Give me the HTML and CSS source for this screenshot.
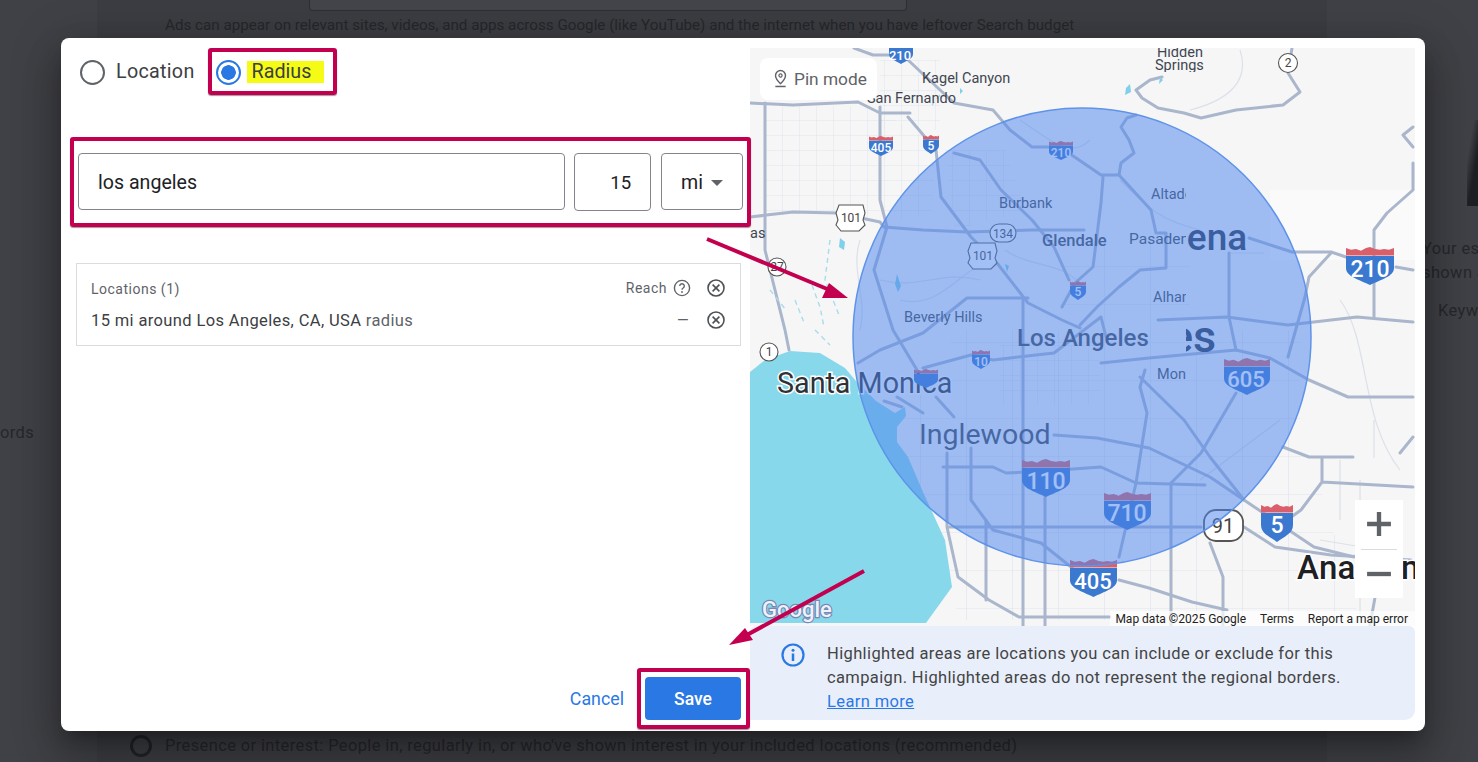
FILE: index.html
```html
<!DOCTYPE html>
<html lang="en">
<head>
<meta charset="utf-8">
<title>Location targeting</title>
<link rel="stylesheet" href="styles.css">
</head>
<body>
<div class="page">
  <div class="bg-left">ords</div>
  <div class="bg-card">
    <div class="bg-box"></div>
    <p class="bg-text">Ads can appear on relevant sites, videos, and apps across Google (like YouTube) and the internet when you have leftover Search budget</p>
    <div class="bg-radio-row"><span class="bg-radio"></span><span>Presence or interest: People in, regularly in, or who've shown interest in your included locations (recommended)</span></div>
  </div>
  <div class="bg-right">
    <div class="bg-wedge"></div>
    <p class="bg-est">Your est<br>shown a</p>
    <p class="bg-key">Keyw</p>
  </div>
</div>

<div class="modal">
  <section class="left">
    <div class="radios">
      <label class="radio"><span class="dot"></span><span class="rtext">Location</span></label>
      <label class="radio radio-on"><span class="dot dot-on"></span><span class="hl">Radius</span></label>
    </div>
    <div class="fields">
      <div class="field field-q">los angeles</div>
      <div class="field field-n">15</div>
      <div class="field field-u"><span>mi</span><span class="caret"></span></div>
    </div>
    <div class="locs">
      <div class="loc-row loc-head">
        <span class="grow loc-title">Locations (1)</span>
        <span>Reach</span>
        <svg class="ic" viewBox="0 0 20 20"><circle cx="10" cy="10" r="7.6" fill="none" stroke="#5f6368" stroke-width="1.4"/><path d="M7.7 8a2.3 2.3 0 1 1 3.5 2c-.8.5-1.2.9-1.2 1.8" fill="none" stroke="#5f6368" stroke-width="1.4"/><circle cx="10" cy="14" r=".9" fill="#5f6368"/></svg>
        <svg class="ic ic-x" viewBox="0 0 20 20"><circle cx="10" cy="10" r="8" fill="none" stroke="#4d5156" stroke-width="1.6"/><path d="M6.6 6.6l6.8 6.8M13.4 6.6l-6.8 6.8" stroke="#4d5156" stroke-width="1.6"/></svg>
      </div>
      <div class="loc-row loc-item">
        <span class="grow">15 mi around Los Angeles, CA, USA <span class="muted">radius</span></span>
        <span class="dash">—</span>
        <svg class="ic ic-x" viewBox="0 0 20 20"><circle cx="10" cy="10" r="8" fill="none" stroke="#4d5156" stroke-width="1.6"/><path d="M6.6 6.6l6.8 6.8M13.4 6.6l-6.8 6.8" stroke="#4d5156" stroke-width="1.6"/></svg>
      </div>
    </div>
    <div class="foot">
      <span class="cancel">Cancel</span>
      <span class="save">Save</span>
    </div>
  </section>

  <section class="right">
    <div class="map">
      <svg class="map-svg" viewBox="750 48 665 578" width="665" height="578">
        <defs>
          <symbol id="shield" viewBox="0 0 48 40" preserveAspectRatio="none">
            <path d="M0 1l5 2 5-1 5 2 5-3 4-1 5 2 5 1 4-1 5 1 5-2v8H0z" fill="#d9606a"/>
            <path d="M0 9.5h48V22c0 9-13 12-24 18C13 34 0 31 0 22z" fill="#3b78d0"/>
          </symbol>
          <pattern id="grid" width="17" height="15" patternUnits="userSpaceOnUse"><path d="M17 0H0V15" fill="none" stroke="#dde3ec"/></pattern>
          <pattern id="gridb" width="46" height="38" patternUnits="userSpaceOnUse"><path d="M46 0H0V38" fill="none" stroke="#dde3ec" stroke-width="1.2"/></pattern>
          <clipPath id="tileR"><rect x="1186" y="48" width="229" height="578"/></clipPath>
          <clipPath id="tileL"><rect x="750" y="48" width="436" height="578"/></clipPath>
          <clipPath id="topEdge"><rect x="750" y="48" width="665" height="24"/></clipPath>
        </defs>
        <rect x="750" y="48" width="665" height="578" fill="#f6f6f6"/>
        <rect x="1270" y="190" width="145" height="70" fill="#fafafa"/>

        <path d="M765 106H880V222L840 212 765 216z" fill="url(#grid)"/>
        <path d="M880 60h60v70h-60z" fill="url(#grid)"/>
        <path d="M880 112l55 30-2 70-53 12z" fill="url(#grid)"/>
        <path d="M945 150h60l20 60-70 20z" fill="url(#grid)"/>
        <path d="M960 330H1300V420L1360 620H960L930 520 880 430z" fill="url(#gridb)"/>
        <path d="M1060 240h130v100h-130z" fill="url(#gridb)"/>
        <path d="M1000 345h100v60h-100z" fill="url(#grid)"/>

        <g fill="none" stroke="#dbe1ea" stroke-width="1.2">
          <path d="M860 240c-10 30 8 60 0 90M880 280c40 10 60-10 100 0M1020 120c30 20 50 40 70 20M1240 50c10 30-10 50-50 60"/>
          <path d="M1005 250c30 20 60 10 80 40M900 300c40 10 60-30 90-40M1120 180c30 30 40 40 80 50"/>
          <path d="M1340 300c30 40 20 120 60 170M1360 480v50M1360 560v60M1374 420v38M1340 460v60"/>
          <path d="M1229 253h35M1200 480l80-60M1320 540l60 10"/>
        </g>

        <g fill="none" stroke="#aab6cc" stroke-width="3" stroke-linejoin="round" stroke-linecap="round">
          <path d="M854 48l19 7 27 0 8 5 46 43 39 7 17 20 22 17h28l41 28h18l32 35 5 23"/>
          <path d="M750 103l43 2 65-3 22 11h30M858 102l22 11"/>
          <path d="M765 103v114 33l20 80 4 20"/>
          <path d="M750 217l43-5 44 1 43 9 4 5"/>
          <path d="M908 117l28 33 5 47 30 40 26 26 31 40 34 17 18 8"/>
          <path d="M880 107v93l7 27-13 43 19 60 24 40"/>
          <path d="M884 227l39 3 44 2 65-2 52 0"/>
          <path d="M954 153l26 7 21 30 31 30 22 27 15 33"/>
          <path d="M1103 177l-2 26-8 64-18 16-13 24"/>
          <path d="M1158 233l8 0v35l-26 2-21 17-22 20-17 18"/>
          <path d="M1119 175l2-12 13-10-5-13-8-13 6-9 9-3"/>
          <path d="M1136 90l6 8 16 10 26 5 17 5 35-8 47-5 17-13-12-19 4-25M1136 90l14-10 12-3"/>
          <path d="M1413 127l-10 8 10 12M1413 163v27l-26 23-13 17v27M1374 257v60"/>
          <path d="M1249 238l43 14h39l15 5M1396 267l17 3"/>
          <path d="M1331 253l-22 24-4 20-17 60"/>
          <path d="M1158 320l69-3 61 8 69-8 56 5"/>
          <path d="M1101 363l48-5 87-8 34 8 39 22 39 17h65"/>
          <path d="M1229 253v64l7 33"/>
          <path d="M1028 298h-61l-44 35-43 17-22 13"/>
          <path d="M923 368l48-13 22 5 17-2 44-5 47-36 5 20"/>
          <path d="M897 397l26 16M936 397l18 20M902 407l-18-6"/>
          <path d="M1023 300v326M1045 497v129"/>
          <path d="M943 467h50l13 6 39-2 56-4 35 16 69 2"/>
          <path d="M1145 370l-5 17 7 26-11 70-17 74"/>
          <path d="M1140 377l44 43 26 37 34 43 70 47 40 10"/>
          <path d="M1236 393l-35 60-30 30v143"/>
          <path d="M1054 435l43 3 52 10 61 29 34 23"/>
          <path d="M971 448v52l22 30 48 13 30 24 20 20"/>
          <path d="M949 527h252"/>
          <path d="M947 453v74l11 50 31 23 30 17h91"/>
          <path d="M986 520v80M1119 580l30 8 43 14 35 8"/>
          <path d="M1210 543l13 34v49"/>
          <path d="M1244 527l31 20 56 8 80 5"/>
          <path d="M1283 447l26 10h44M1322 458v24M1322 482l91 5M1322 482l-21 28-25 18"/>
          <path d="M1400 453l13-16M1380 570l-10 55"/>
        </g>

        <g fill="none" stroke="#a8dcec" stroke-width="1.4" stroke-dasharray="5 4">
          <path d="M812 285l8 22 4 20M830 240l-5 40 14 35M795 300l10 25M770 290l16 20M815 330l15 15M940 95l-8 10"/>
        </g>
        <g fill="#7fd0ea"><path d="M840 238l5 4-1 8-5-3zM1126 88l4-4 1 8-6 3zM897 274l4 12-3 6-3-8zM1005 264l4 2-2 6zM960 88l3 3-3 3zM1160 77l3 3-4 4z"/></g>

        <path d="M750 372l15-12 25-9 30 2 25 15 11 13 20 20 19 12 10-6 1 9-9 11v15l11 15 15 35 22 48 7 47-26 36H750z" fill="#88d8ec"/>

        <g font-family="Roboto, sans-serif" fill="#3f4652">
          <text x="1157" y="57" font-size="14.5" clip-path="url(#topEdge)">Hidden</text>
          <text x="1155" y="70" font-size="14.5" clip-path="url(#topEdge)">Springs</text>
          <text x="922" y="83" font-size="14.5">Kagel Canyon</text>
          <text x="867" y="103" font-size="14.5">San Fernando</text>
          <text x="750" y="238" font-size="14.5">as</text>
          <text x="999" y="208" font-size="14.5">Burbank</text>
          <text x="1151" y="199" font-size="14.5" clip-path="url(#tileL)">Altadena</text>
          <text x="1042" y="246" font-size="16.5" font-weight="500">Glendale</text>
          <text x="1129" y="244" font-size="15.5" clip-path="url(#tileL)">Pasadena</text>
          <text x="1153" y="302" font-size="14.5" clip-path="url(#tileL)">Alhambra</text>
          <text x="904" y="322" font-size="14.5">Beverly Hills</text>
          <text x="1157" y="379" font-size="14.5" clip-path="url(#tileL)">Monterey</text>
          <text x="1017" y="346" font-size="24" font-weight="500">Los Angeles</text>
          <text x="1166" y="250" font-size="37" font-weight="500" fill="#27324a" clip-path="url(#tileR)">dena</text>
          <text x="1169" y="352" font-size="45" font-weight="500" fill="#27324a" clip-path="url(#tileR)">es</text>
          <text x="919" y="444" font-size="28.5">Inglewood</text>
          <text x="777" y="393" font-size="28.7" fill="#2f3137" stroke="#fff" stroke-width="3" paint-order="stroke">Santa Monica</text>
          <text x="1297" y="579" font-size="33" font-weight="500" letter-spacing=".3" fill="#1f2024" stroke="#fff" stroke-width="3" paint-order="stroke">Anaheim</text>
        </g>

        <g font-family="Roboto, sans-serif" font-size="12" text-anchor="middle" fill="#444">
          <g fill="#fff" stroke="#555" stroke-width="1.1">
            <path d="M839 205h24l2 8-2 7 2 5-6 6h-18l-5-6 2-5-2-7z"/>
            <path d="M971 243h24l2 8-2 7 2 5-6 6h-18l-5-6 2-5-2-7z"/>
            <rect x="990" y="224" width="26" height="18" rx="9"/>
            <circle cx="1288" cy="63" r="9.500"/>
            <circle cx="769" cy="352" r="9"/>
            <circle cx="777" cy="267" r="9"/>
            <rect x="1204" y="510" width="39" height="31" rx="12" stroke-width="1.800"/>
          </g>
          <text x="851" y="222">101</text>
          <text x="983" y="260">101</text>
          <text x="1003" y="238">134</text>
          <text x="1288" y="67">2</text>
          <text x="769" y="356">1</text>
          <text x="777" y="271">27</text>
          <text x="1223" y="533" font-size="20">91</text>
        </g>

        <g font-family="Roboto, sans-serif" font-weight="500" fill="#fff" text-anchor="middle">
          <use href="#shield" x="889" y="42" width="24" height="22"/><text x="900" y="60" font-size="13">210</text>
          <use href="#shield" x="869" y="136" width="24" height="20"/><text x="881" y="152" font-size="12">405</text>
          <use href="#shield" x="923" y="135" width="16" height="19"/><text x="931" y="150" font-size="12">5</text>
          <use href="#shield" x="1049" y="141" width="24" height="19"/><text x="1061" y="157" font-size="12">210</text>
          <use href="#shield" x="1070" y="281" width="16" height="19"/><text x="1078" y="296" font-size="12">5</text>
          <use href="#shield" x="972" y="350" width="18" height="19"/><text x="981" y="366" font-size="12">10</text>
          <use href="#shield" x="914" y="369" width="24" height="19"/>
          <use href="#shield" x="1224" y="358" width="46" height="37"/><text x="1246" y="387" font-size="22">605</text>
          <use href="#shield" x="1346" y="247" width="48" height="38"/><text x="1370" y="277" font-size="23">210</text>
          <use href="#shield" x="1022" y="459" width="48" height="38"/><text x="1046" y="489" font-size="23">110</text>
          <use href="#shield" x="1104" y="492" width="47" height="38"/><text x="1127" y="521" font-size="23">710</text>
          <use href="#shield" x="1070" y="559" width="47" height="38"/><text x="1093" y="589" font-size="22">405</text>
          <use href="#shield" x="1261" y="504" width="32" height="38"/><text x="1277" y="533" font-size="23">5</text>
        </g>

        <circle cx="1082" cy="337" r="229" fill="#4d86ee" fill-opacity=".52" stroke="#5f93e8" stroke-width="1.5"/>

        <text x="762" y="617" font-family="Roboto, sans-serif" font-size="22" font-weight="500" fill="#eef2fa" stroke="#7688b4" stroke-width="2.4" paint-order="stroke">Google</text>
      </svg>

      <div class="pin"><svg class="pin-ic" viewBox="0 0 16 20"><path d="M8 1.5a5.3 5.3 0 0 0-5.3 5.3C2.700 10.500 8 15.500 8 15.500s5.300-5 5.300-8.700A5.300 5.300 0 0 0 8 1.500z" fill="none" stroke="#5f6368" stroke-width="1.500"/><circle cx="8" cy="6.800" r="1.700" fill="none" stroke="#5f6368" stroke-width="1.300"/><path d="M2.500 18.500h11" stroke="#5f6368" stroke-width="1.600"/></svg><span>Pin mode</span></div>
      <div class="zoom">
        <span class="zbtn"><svg viewBox="0 0 24 24" width="26" height="26"><path d="M12 1v22M1 12h22" stroke="#5f6368" stroke-width="4"/></svg></span>
        <span class="zsep"></span>
        <span class="zbtn"><svg viewBox="0 0 24 24" width="26" height="26"><path d="M1 12h22" stroke="#5f6368" stroke-width="4"/></svg></span>
      </div>
      <div class="attrib"><span>Map data ©2025 Google</span><span>Terms</span><span>Report a map error</span></div>
    </div>
    <div class="info">
      <svg class="info-ic" viewBox="0 0 24 24"><circle cx="12" cy="12" r="10.500" fill="none" stroke="#2a78e4" stroke-width="2.200"/><circle cx="12" cy="7.200" r="1.500" fill="#2a78e4"/><path d="M12 10.500v7.500" stroke="#2a78e4" stroke-width="2.500"/></svg>
      <p>Highlighted areas are locations you can include or exclude for this<br>campaign. Highlighted areas do not represent the regional borders.<br><a href="#">Learn more</a></p>
    </div>
  </section>

  <div class="mark mark-radius"></div>
  <div class="mark mark-fields"></div>
  <div class="mark mark-save"></div>
</div>

<svg class="arrows" viewBox="0 0 1478 762" width="1478" height="762">
  <path d="M707 239L832 291" stroke="#c2004f" stroke-width="4"/>
  <path d="M848 298L822 298 829 283z" fill="#c2004f"/>
  <path d="M864 571L745 636" stroke="#c2004f" stroke-width="4"/>
  <path d="M729 645L745 628 753 640z" fill="#c2004f"/>
</svg>
</body>
</html>
```
FILE: styles.css
```css
* { box-sizing: border-box; }
html, body { margin: 0; height: 762px; overflow: hidden; }
body { background: #404146; font-family: Roboto, "Liberation Sans", sans-serif; color: #202124; }

.page { display: grid; grid-template-columns: 97px 1230px 151px; height: 762px; color: #26272b; font-size: 16.5px; letter-spacing: .37px; }
.bg-left { padding-top: 423px; line-height: 20px; }
.bg-card { display: flex; flex-direction: column; background: #3c3d42; }
.bg-box { width: 598px; height: 11px; margin-left: 212px; border: 1px solid #2e2f33; border-top: 0; border-radius: 0 0 4px 4px; background: #44454a; }
.bg-text { margin: 5px 0 0 68px; font-size: 15.200px; letter-spacing: 0; line-height: 18px; white-space: nowrap; }
.bg-radio-row { display: flex; align-items: center; gap: 13px; margin: 701px 0 0 33px; white-space: nowrap; line-height: 22px; }
.bg-radio { width: 22px; height: 22px; border: 3px solid #222327; border-radius: 50%; flex: none; }
.bg-right { padding-left: 95px; overflow: hidden; white-space: nowrap; }
.bg-wedge { width: 12px; height: 86px; margin: 120px 0 0 45px; background: linear-gradient(100deg, transparent 25%, #1e1f22 60%); }
.bg-est { margin: 31px 0 0; line-height: 24px; }
.bg-key { margin: 14px 0 0 16px; line-height: 24px; }

.modal { position: absolute; left: 61px; top: 38px; width: 1364px; height: 693px; display: grid; grid-template-columns: 689px 665px; padding: 10px 0 11px; background: #fff; border-radius: 8px; box-shadow: 0 11px 15px -7px rgba(0,0,0,.25), 0 24px 38px 3px rgba(0,0,0,.2), 0 9px 46px 8px rgba(0,0,0,.18); }

.left { display: flex; flex-direction: column; padding: 12px 9px 0 17px; }
.radios { display: flex; align-items: center; height: 24px; padding-left: 2px; gap: 21px; font-size: 19.700px; letter-spacing: .3px; color: #3c4043; }
.radio { display: flex; align-items: center; gap: 11px; }
.radio-on { gap: 6px; }
.rtext { margin-bottom: 2px; }
.dot { width: 25px; height: 25px; border: 2.5px solid #5f6368; border-radius: 50%; flex: none; }
.dot-on { border-color: #2a78e4; background: radial-gradient(circle, #2a78e4 0 7px, #fff 7.500px); }
.hl { width: 77px; height: 22px; padding-left: 5px; background: #f6fb16; line-height: 21px; letter-spacing: 0; }

.fields { display: flex; gap: 9px; margin-top: 69px; width: 665px; font-size: 19.600px; color: #202124; }
.field { height: 57px; display: flex; align-items: center; padding-top: 2px; border: 1px solid #80868b; border-radius: 4px; }
.field-q { width: 488px; padding-left: 19px; }
.field-n { width: 77px; justify-content: flex-end; padding-right: 19px; height: 58px; font-size: 18.500px; }
.field-u { width: 82px; margin-left: 1px; padding-left: 19px; gap: 8px; }
.caret { width: 0; height: 0; border: 6px solid transparent; border-top: 6px solid #5f6368; border-bottom: 0; }

.locs { margin: 52px 0 0 -2px; width: 665px; height: 83px; border: 1px solid #dadce0; padding: 12px 14px 0; }
.loc-row { display: flex; align-items: center; gap: 5px; }
.grow { flex: 1; }
.loc-head { height: 24px; font-size: 14px; letter-spacing: .5px; color: #5f6368; }
.loc-title { padding-top: 2px; }
.loc-item { height: 24px; margin-top: 8px; font-size: 16.500px; letter-spacing: .37px; color: #3c4043; }
.muted { color: #5f6368; }
.dash { width: 16px; margin-right: -1px; font-size: 15px; letter-spacing: 0; color: #5f6368; }
.ic { width: 20px; height: 20px; flex: none; }
.ic-x { margin-left: 9px; }

.foot { display: flex; align-items: center; justify-content: flex-end; gap: 21px; margin-top: auto; }
.cancel { font-size: 17.800px; color: #2a78e4; }
.save { display: flex; align-items: center; justify-content: center; width: 96px; height: 43px; background: #2a78e4; color: #fff; border-radius: 4px; font-size: 17.500px; font-weight: 500; }

.right { display: flex; flex-direction: column; height: 672px; }
.map { position: relative; height: 578px; overflow: hidden; }
.map-svg { display: block; }
.pin { position: absolute; left: 10px; top: 10px; display: flex; align-items: center; gap: 6px; width: 117px; height: 42px; padding: 0 0 1px 13px; background: #fff; border-radius: 8px; font-size: 17.300px; color: #5f6368; }
.pin-ic { width: 15px; height: 19px; }
.zoom { position: absolute; left: 605px; top: 452px; width: 48px; height: 98px; display: flex; flex-direction: column; align-items: center; background: #fff; }
.zbtn { flex: 1; display: flex; align-items: center; justify-content: center; }
.zsep { width: 36px; height: 1px; background: #dadce0; }
.attrib { position: absolute; right: 0; bottom: 0; display: flex; gap: 14px; height: 15px; padding: 1px 7px 0 5px; background: rgba(255,255,255,.7); font-size: 12px; line-height: 15px; color: #222; }

.info { display: flex; gap: 22px; height: 94px; padding: 16px 16px 0 31px; background: #e8effb; border-radius: 6px 6px 10px 0; }
.info p { margin: 0; font-size: 16.500px; letter-spacing: .37px; line-height: 24px; color: #444; }
.info a { color: #2a78e4; }
.info-ic { width: 24px; height: 24px; margin-top: 1px; flex: none; }

.mark { position: absolute; border: 4px solid #c2004f; border-radius: 3px; box-shadow: 0 1px 1px rgba(0,0,0,.4); }
.mark-radius { left: 147px; top: 10px; width: 129px; height: 47px; }
.mark-fields { left: 9px; top: 99px; width: 681px; height: 90px; }
.mark-save { left: 576px; top: 630px; width: 113px; height: 61px; }

.arrows { position: absolute; left: 0; top: 0; pointer-events: none; }
```
